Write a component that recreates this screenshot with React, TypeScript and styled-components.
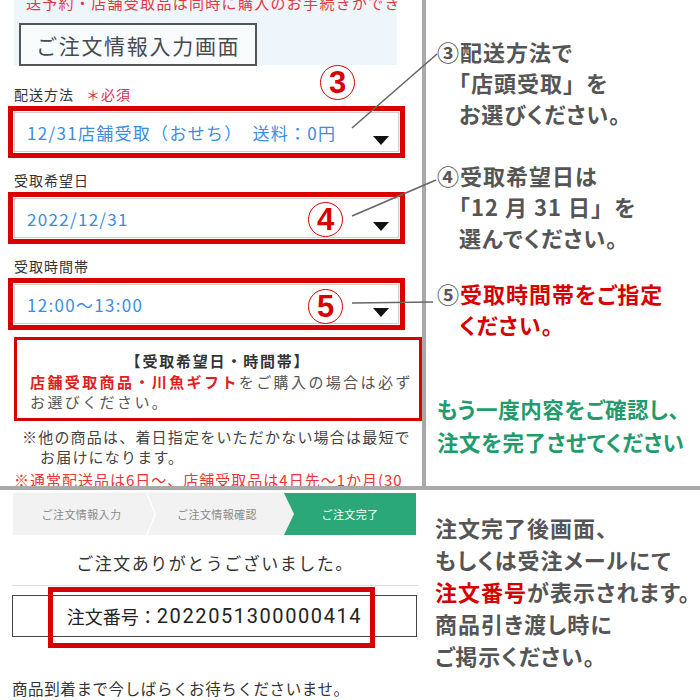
import React from "react"
import styled, { createGlobalStyle } from "styled-components"

const Colors = {
  frame: "#d90000",
  red: "#d60000",
  text: "#555",
  bar: "#a9a9a9",
  green: "#1f9b6c",
  step: "#2aa877",
  blue: "#3b8de0",
}

const GlobalStyle = createGlobalStyle`
  html, body { margin: 0; padding: 0; background: #fff; }
  body { font-family: "Noto Sans CJK JP", "Noto Sans", sans-serif; }
`

export default function App() {
  return (
    <>
      <GlobalStyle />
      <S.Page>
        <S.Top>
          <S.LeftTop>
            <S.Notice>
              <S.NoticeText>送予約・店舗受取品は同時に購入のお手続きができ</S.NoticeText>
              <S.TitleBox>ご注文情報入力画面</S.TitleBox>
            </S.Notice>

            <S.FieldLabel $top={17}>
              配送方法<S.Required>＊必須</S.Required>
            </S.FieldLabel>
            <SelectField value="12/31店舗受取（おせち）　送料：0円" />

            <S.FieldLabel $top={10}>受取希望日</S.FieldLabel>
            <SelectField value="2022/12/31" />

            <S.FieldLabel $top={10}>受取時間帯</S.FieldLabel>
            <SelectField value="12:00〜13:00" />

            <S.InfoBox>
              <S.InfoTitle>【受取希望日・時間帯】</S.InfoTitle>
              <div>
                <S.InfoRed>店舗受取商品・川魚ギフト</S.InfoRed>をご購入の場合は必ず
              </div>
              <div>お選びください。</div>
            </S.InfoBox>

            <S.Note>
              <div>※他の商品は、着日指定をいただかない場合は最短で</div>
              <S.NoteIndent>お届けになります。</S.NoteIndent>
            </S.Note>
            <S.RedNote>※通常配送品は6日〜、店舗受取品は4日先〜1か月(30</S.RedNote>
          </S.LeftTop>

          <S.VBar />

          <S.RightTop>
            <S.Callout $top={0}>
              <div>③配送方法で</div>
              <S.CalloutLine $indent={11} $plain>「店頭受取」を</S.CalloutLine>
              <S.CalloutLine $indent={22}>お選びください。</S.CalloutLine>
            </S.Callout>
            <S.Callout $top={31}>
              <div>④受取希望日は</div>
              <S.CalloutLine $indent={11} $plain>「12 月 31 日」を</S.CalloutLine>
              <S.CalloutLine $indent={22}>選んでください。</S.CalloutLine>
            </S.Callout>
            <S.Callout $top={25}>
              <div>
                ⑤<S.CalloutRed>受取時間帯をご指定</S.CalloutRed>
              </div>
              <S.CalloutLine $indent={22}>
                <S.CalloutRed>ください。</S.CalloutRed>
              </S.CalloutLine>
            </S.Callout>
            <S.GreenNote>
              <div>もう一度内容をご確認し、</div>
              <div>注文を完了させてください</div>
            </S.GreenNote>
          </S.RightTop>

          <S.Lines viewBox="0 0 700 486" width="700" height="486">
            <line x1="352" y1="128" x2="437" y2="54" />
            <line x1="352" y1="216" x2="436" y2="180" />
            <line x1="352" y1="303" x2="433" y2="302" />
          </S.Lines>
          <S.Badge $left={320} $top={65}>3</S.Badge>
          <S.Badge $left={308} $top={202}>4</S.Badge>
          <S.Badge $left={308} $top={289}>5</S.Badge>
        </S.Top>

        <S.HBar />

        <S.Bottom>
          <S.LeftBottom>
            <S.Steps>
              <S.Step $sep>ご注文情報入力</S.Step>
              <S.Step>ご注文情報確認</S.Step>
              <S.Step $active>ご注文完了</S.Step>
            </S.Steps>
            <S.Thanks>ご注文ありがとうございました。</S.Thanks>
            <S.Divider />
            <S.OrderBox>
              <span>注文番号：</span>
              <S.OrderNo>2022051300000414</S.OrderNo>
              <S.Highlight />
            </S.OrderBox>
            <S.Waiting>商品到着まで今しばらくお待ちくださいませ。</S.Waiting>
          </S.LeftBottom>
          <S.RightBottom>
            <div>注文完了後画面、</div>
            <div>もしくは受注メールにて</div>
            <div>
              <S.CalloutRed>注文番号</S.CalloutRed>が表示されます。
            </div>
            <div>商品引き渡し時に</div>
            <div>ご掲示ください。</div>
          </S.RightBottom>
        </S.Bottom>
      </S.Page>
    </>
  )
}

const SelectField = ({ value }: { value: string }) => {
  return (
    <S.RedFrame>
      <S.Select>
        <S.SelectValue>{value}</S.SelectValue>
        <S.Arrow />
      </S.Select>
    </S.RedFrame>
  )
}

const S = {
  Page: styled.div`
    width: 700px;
    height: 700px;
    overflow: hidden;
    display: flex;
    flex-direction: column;
    background: #fff;
  `,
  Top: styled.div`
    position: relative;
    display: grid;
    grid-template-columns: 422px 4px 1fr;
    height: 486px;
    overflow: hidden;
  `,
  LeftTop: styled.div`
    display: flex;
    flex-direction: column;
    overflow: hidden;
  `,
  Notice: styled.div`
    margin-left: 14px;
    width: 383px;
    padding-left: 5px;
    box-sizing: border-box;
    background: #eef6fc;
    display: flex;
    flex-direction: column;
  `,
  NoticeText: styled.div`
    margin-top: -7px;
    padding-left: 7px;
    font-size: 15px;
    line-height: 20px;
    letter-spacing: 1.3px;
    color: #e4383e;
    white-space: nowrap;
  `,
  TitleBox: styled.div`
    margin: 10px 0 -1px;
    width: 238px;
    height: 43px;
    box-sizing: border-box;
    border: 2px solid #555;
    background: #f8fcff;
    display: flex;
    align-items: center;
    padding-left: 15px;
    font-size: 21px;
    letter-spacing: 1.7px;
    color: #4a4a4a;
  `,
  FieldLabel: styled.div<{ $top: number }>`
    margin: ${({ $top }) => $top}px 0 0 14px;
    font-size: 14px;
    line-height: 24px;
    letter-spacing: 1px;
    color: #333;
  `,
  Required: styled.span`
    margin-left: 12px;
    color: #d9304f;
  `,
  RedFrame: styled.div`
    margin-left: 8px;
    width: 397px;
    box-sizing: border-box;
    border: 5px solid ${Colors.frame};
    padding: 1px;
  `,
  Select: styled.div`
    height: 40px;
    box-sizing: border-box;
    border: 1px solid #cfcfcf;
    background: #fff;
    display: flex;
    align-items: center;
    padding: 0 9px 0 12px;
    font-size: 17px;
    letter-spacing: 1.3px;
    color: ${Colors.blue};
  `,
  SelectValue: styled.div`
    flex: 1;
    white-space: pre;
  `,
  Arrow: styled.div`
    align-self: flex-end;
    margin-bottom: 6px;
    width: 0;
    height: 0;
    border-left: 8px solid transparent;
    border-right: 8px solid transparent;
    border-top: 9px solid #111;
  `,
  InfoBox: styled.div`
    margin: 7px 0 0 14px;
    width: 408px;
    box-sizing: border-box;
    border: 3px solid ${Colors.frame};
    padding: 11px 2px 5px 13px;
    font-size: 15px;
    line-height: 20.5px;
    letter-spacing: 2.4px;
    color: #555;
    white-space: nowrap;
  `,
  InfoTitle: styled.div`
    text-align: center;
    font-weight: 700;
    color: #333;
    letter-spacing: 1.8px;
    margin-right: 11px;
  `,
  InfoRed: styled.span`
    font-weight: 700;
    color: #e02020;
  `,
  Note: styled.div`
    margin: 6px 0 0 22px;
    font-size: 15px;
    line-height: 20px;
    letter-spacing: 1.2px;
    color: #444;
    white-space: nowrap;
  `,
  NoteIndent: styled.div`
    padding-left: 18px;
  `,
  RedNote: styled.div`
    margin: 3px 0 0 14px;
    font-size: 15px;
    line-height: 20px;
    letter-spacing: 1px;
    color: #e33;
    white-space: nowrap;
  `,
  VBar: styled.div`
    background: ${Colors.bar};
  `,
  RightTop: styled.div`
    padding: 36px 0 0 11px;
    display: flex;
    flex-direction: column;
  `,
  Callout: styled.div<{ $top: number }>`
    margin-top: ${({ $top }) => $top}px;
    font-size: 22px;
    font-weight: 700;
    line-height: 31px;
    letter-spacing: 1px;
    color: ${Colors.text};
    font-feature-settings: "palt";
    white-space: nowrap;
  `,
  CalloutLine: styled.div<{ $indent: number; $plain?: boolean }>`
    padding-left: ${({ $indent }) => $indent}px;
    font-feature-settings: ${({ $plain }) => ($plain ? "normal" : "\"palt\"")};
  `,
  CalloutRed: styled.span`
    color: ${Colors.red};
  `,
  GreenNote: styled.div`
    margin-top: 52px;
    font-size: 21.5px;
    font-weight: 700;
    line-height: 33px;
    color: ${Colors.green};
    font-feature-settings: "palt";
    letter-spacing: 0.6px;
    white-space: nowrap;
  `,
  Lines: styled.svg`
    position: absolute;
    left: 0;
    top: 0;
    pointer-events: none;
    stroke: #666;
    stroke-width: 1.6;
  `,
  Badge: styled.div<{ $left: number; $top: number }>`
    position: absolute;
    left: ${({ $left }) => $left}px;
    top: ${({ $top }) => $top}px;
    width: 35px;
    height: 35px;
    box-sizing: border-box;
    border: 1.5px solid ${Colors.red};
    border-radius: 50%;
    display: flex;
    align-items: center;
    justify-content: center;
    font-family: "Liberation Sans", Arial, sans-serif;
    font-weight: 700;
    font-size: 31px;
    line-height: 1;
    color: ${Colors.red};
    background: rgba(255, 255, 255, 0.6);
  `,
  HBar: styled.div`
    height: 4px;
    background: ${Colors.bar};
  `,
  Bottom: styled.div`
    display: grid;
    grid-template-columns: 422px 1fr;
    flex: 1;
  `,
  LeftBottom: styled.div`
    padding: 3px 0 0 12px;
    display: flex;
    flex-direction: column;
  `,
  Steps: styled.div`
    margin-left: 1px;
    width: 403px;
    height: 42px;
    display: grid;
    grid-template-columns: 137px 134px 132px;
    background: #f2f2f2;
  `,
  Step: styled.div<{ $active?: boolean; $sep?: boolean }>`
    position: relative;
    display: flex;
    align-items: center;
    justify-content: center;
    font-size: 11px;
    letter-spacing: 0.4px;
    color: ${({ $active }) => ($active ? "#fff" : "#8a8a8a")};
    background: ${({ $active }) => ($active ? Colors.step : "transparent")};

    &::before {
      content: "";
      display: ${({ $active }) => ($active ? "block" : "none")};
      position: absolute;
      left: 0;
      top: 0;
      width: 0;
      height: 0;
      border-left: 10px solid #f2f2f2;
      border-top: 21px solid transparent;
      border-bottom: 21px solid transparent;
    }

    &::after {
      content: "";
      display: ${({ $sep }) => ($sep ? "block" : "none")};
      position: absolute;
      right: -6px;
      top: 0;
      width: 10px;
      height: 100%;
      background: #fff;
      clip-path: polygon(0 0, 1.5px 0, 100% 50%, 1.5px 100%, 0 100%, calc(100% - 1.5px) 50%);
    }
  `,
  Thanks: styled.div`
    margin-top: 14px;
    width: 406px;
    text-align: center;
    font-size: 17px;
    line-height: 28px;
    letter-spacing: 1.5px;
    color: #333;
  `,
  Divider: styled.div`
    margin-top: 8px;
    width: 406px;
    height: 1px;
    background: #ddd;
  `,
  OrderBox: styled.div`
    position: relative;
    margin-top: 9px;
    width: 405px;
    height: 42px;
    box-sizing: border-box;
    border: 1px solid #444;
    display: flex;
    align-items: center;
    justify-content: center;
    font-size: 18px;
    color: #222;
  `,
  OrderNo: styled.span`
    font-family: "Roboto", "Noto Sans", sans-serif;
    font-size: 20px;
    letter-spacing: 1.6px;
  `,
  Highlight: styled.div`
    position: absolute;
    left: 35px;
    top: -9px;
    width: 327px;
    height: 61px;
    box-sizing: border-box;
    border: 5px solid ${Colors.frame};
  `,
  Waiting: styled.div`
    margin-top: 39px;
    font-size: 15.5px;
    line-height: 24px;
    letter-spacing: 0.6px;
    color: #333;
    white-space: nowrap;
  `,
  RightBottom: styled.div`
    padding: 21px 0 0 13px;
    font-size: 22px;
    font-weight: 700;
    line-height: 32px;
    color: ${Colors.text};
    font-feature-settings: "palt";
    letter-spacing: 1px;
    white-space: nowrap;
  `,
}
